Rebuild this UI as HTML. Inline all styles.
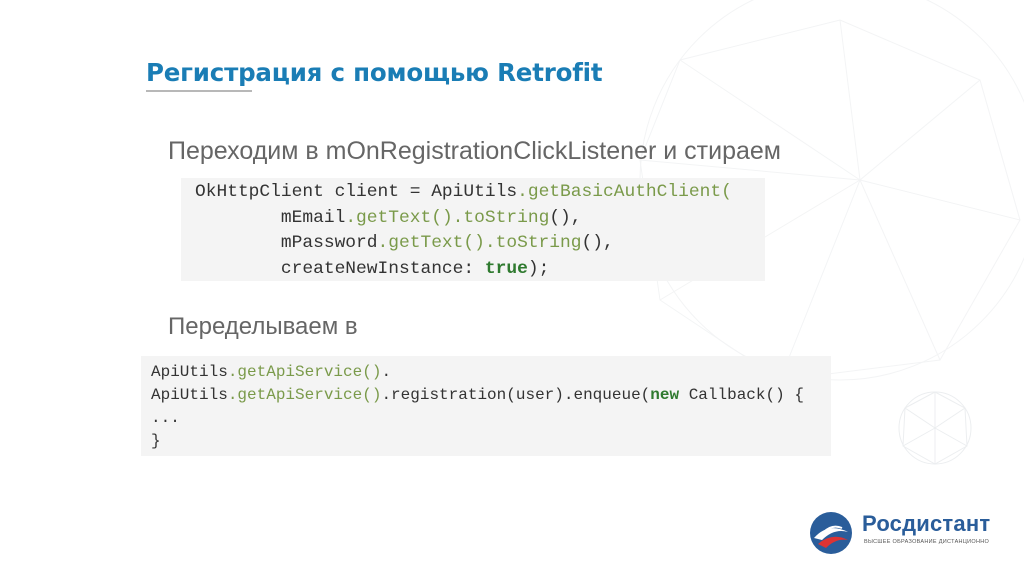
<!DOCTYPE html>
<html><head><meta charset="utf-8"><style>
body{margin:0;width:1024px;height:574px;background:#fff;position:relative;overflow:hidden;font-family:"Liberation Sans","DejaVu Sans",sans-serif}
.t{position:absolute;left:146px;top:58px;font-family:"DejaVu Sans",sans-serif;font-size:24.5px;font-weight:bold;color:#1a7db5;letter-spacing:-0.2px}
.ul{position:absolute;left:146px;top:90px;width:106px;height:2px;background:#b8b8b8}
.p{position:absolute;font-family:"Liberation Sans",sans-serif;font-size:22px;color:#666}
.code{position:absolute;background:#f4f4f4;font-family:"Liberation Mono",monospace;color:#333;white-space:pre}
.g{color:#7a9a4a}.k{color:#2f7a2f;font-weight:bold}
</style></head><body>
<svg style="position:absolute;left:560px;top:0" width="464" height="400" viewBox="0 0 464 400" fill="none" stroke="#f3f4f5" stroke-width="1">
<circle cx="280" cy="180" r="200"/><path d="M120 60 L280 20 L420 80 L460 220 L380 360 L220 380 L100 300 L80 160 Z M280 20 L300 180 L420 80 M300 180 L460 220 M300 180 L380 360 M300 180 L220 380 M300 180 L100 300 M300 180 L80 160 M300 180 L120 60"/>
</svg>
<svg style="position:absolute;left:895px;top:388px" width="80" height="80" viewBox="0 0 80 80" fill="none" stroke="#eceef0"><circle cx="40" cy="40" r="36"/><path d="M10 20 L40 4 L70 20 L72 58 L40 76 L8 58 Z M40 4 L40 40 L70 20 M40 40 L72 58 M40 40 L8 58 M40 40 L10 20 M40 40 L40 76"/></svg>
<div class="t">Регистрация с помощью Retrofit</div>
<div class="ul"></div>
<div class="p" style="left:168px;top:137px;font-size:25px">Переходим в mOnRegistrationClickListener и стираем</div>
<div class="code" style="left:181px;top:178px;width:584px;height:103px;font-size:17.9px;line-height:25.5px;padding:2px 0 0 14px;box-sizing:border-box">OkHttpClient client = ApiUtils<span class="g">.getBasicAuthClient(</span>
        mEmail<span class="g">.getText().toString</span>(),
        mPassword<span class="g">.getText().toString</span>(),
        createNewInstance: <span class="k">true</span>);</div>
<div class="p" style="left:168px;top:313px;font-size:24px">Переделываем в</div>
<div class="code" style="left:141px;top:356px;width:690px;height:100px;font-size:16px;line-height:23px;padding:5px 0 0 10px;box-sizing:border-box">ApiUtils<span class="g">.getApiService()</span>.
ApiUtils<span class="g">.getApiService()</span>.registration(user).enqueue(<span class="k">new</span> Callback() {
...
}</div>
<svg style="position:absolute;left:808px;top:510px" width="46" height="46" viewBox="0 0 46 46">
<circle cx="23" cy="23" r="21" fill="#2a5d9a"/><path d="M6 28 Q20 12 40 22 Q26 18 14 30 Z" fill="#fff"/><path d="M10 34 Q24 22 40 30 Q28 28 18 38 Z" fill="#d33"/><path d="M16 22 Q24 14 34 18" stroke="#fff" stroke-width="2" fill="none"/></svg>
<div style="position:absolute;left:862px;top:511px;font-size:22px;font-weight:bold;color:#2a5d9a;letter-spacing:0.2px">Росдистант</div>
<div style="position:absolute;left:864px;top:539px;font-size:5.5px;color:#555;letter-spacing:0.3px">ВЫСШЕЕ ОБРАЗОВАНИЕ ДИСТАНЦИОННО</div>
</body></html>
